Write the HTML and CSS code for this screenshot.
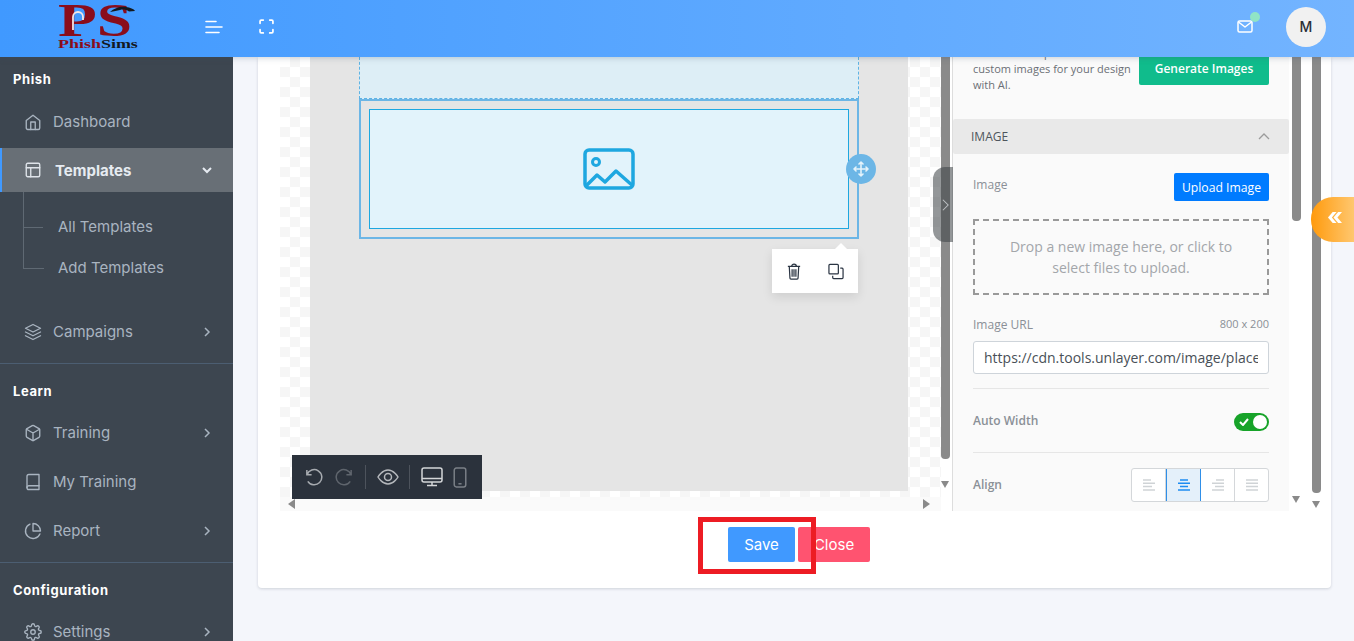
FILE: index.html
```html
<!DOCTYPE html>
<html lang="en">
<head>
  <meta charset="UTF-8">
  <title>Add Templates</title>
  <link rel="stylesheet" href="styles.css">
</head>
<body>
  <header class="topbar">
    <div class="logo">
      <div class="logo-ps">PS</div>
      <div class="logo-name"><span class="logo-red">Phish</span>Sims</div>
      <svg class="logo-art" viewBox="0 0 79 30" fill="none">
        <path d="M15 25V12a5 5 0 0 1 10 0v3" stroke="#f3e6e6" stroke-width="1.800"/>
        <path d="M52 7c4-4 11-6 16-5 4 .6 8 2 9 4l-6 .5c-3-2-6-2.500-9-1.500-3 .8-6 1.500-10 2z" fill="#14191f"/>
      </svg>
    </div>
    <svg class="top-icon menu-icon" viewBox="0 0 18 14" fill="none" stroke="#fff" stroke-width="1.600" stroke-linecap="round">
      <path d="M1 1.500h10M1 7h16M1 12.500h13"/>
    </svg>
    <svg class="top-icon full-icon" viewBox="0 0 14 14" fill="none" stroke="#fff" stroke-width="1.600" stroke-linecap="round">
      <path d="M1 4V2a1 1 0 0 1 1-1h2M10 1h2a1 1 0 0 1 1 1v2M13 10v2a1 1 0 0 1-1 1h-2M4 13H2a1 1 0 0 1-1-1v-2"/>
    </svg>
    <div class="top-right">
      <div class="mail">
        <svg viewBox="0 0 16 13" fill="none" stroke="#fff" stroke-width="1.500" stroke-linejoin="round">
          <rect x="1" y="1" width="14" height="11" rx="1.500"/>
          <path d="M1.500 2l6.500 5 6.500-5"/>
        </svg>
        <span class="mail-dot"></span>
      </div>
      <div class="avatar">M</div>
    </div>
  </header>

  <div class="layout">
    <aside class="sidebar">
      <div class="nav-label nav-label-first">Phish</div>
      <a class="nav-item">
        <svg class="nav-icon" viewBox="0 0 24 24"><path d="M3 10l9-7 9 7v10a2 2 0 0 1-2 2H5a2 2 0 0 1-2-2z"/><path d="M9 22V12h6v10"/></svg>
        <span>Dashboard</span>
      </a>
      <a class="nav-item nav-active">
        <svg class="nav-icon" viewBox="0 0 24 24"><rect x="3" y="3" width="18" height="18" rx="2"/><path d="M3 9h18M9 21V9"/></svg>
        <span>Templates</span>
        <svg class="nav-arrow nav-arrow-down" viewBox="0 0 12 12"><path d="M2 4l4 4 4-4"/></svg>
      </a>
      <div class="subnav">
        <a class="sub-item">All Templates</a>
        <a class="sub-item">Add Templates</a>
      </div>
      <a class="nav-item">
        <svg class="nav-icon" viewBox="0 0 24 24"><path d="M12 2L2 7l10 5 10-5z"/><path d="M2 17l10 5 10-5M2 12l10 5 10-5"/></svg>
        <span>Campaigns</span>
        <svg class="nav-arrow" viewBox="0 0 12 12"><path d="M4 2l4 4-4 4"/></svg>
      </a>
      <div class="nav-divider"></div>
      <div class="nav-label">Learn</div>
      <a class="nav-item">
        <svg class="nav-icon" viewBox="0 0 24 24"><path d="M21 16V8a2 2 0 0 0-1-1.730l-7-4a2 2 0 0 0-2 0l-7 4A2 2 0 0 0 3 8v8a2 2 0 0 0 1 1.730l7 4a2 2 0 0 0 2 0l7-4A2 2 0 0 0 21 16z"/><path d="M3.300 7L12 12l8.700-5M12 22V12"/></svg>
        <span>Training</span>
        <svg class="nav-arrow" viewBox="0 0 12 12"><path d="M4 2l4 4-4 4"/></svg>
      </a>
      <a class="nav-item">
        <svg class="nav-icon" viewBox="0 0 24 24"><path d="M4 19.500A2.500 2.500 0 0 1 6.500 17H20"/><path d="M6.500 2H20v20H6.500A2.500 2.500 0 0 1 4 19.500v-15A2.500 2.500 0 0 1 6.500 2z"/></svg>
        <span>My Training</span>
      </a>
      <a class="nav-item">
        <svg class="nav-icon" viewBox="0 0 24 24"><path d="M21.200 15.900A10 10 0 1 1 8 2.800"/><path d="M22 12A10 10 0 0 0 12 2v10z"/></svg>
        <span>Report</span>
        <svg class="nav-arrow" viewBox="0 0 12 12"><path d="M4 2l4 4-4 4"/></svg>
      </a>
      <div class="nav-divider"></div>
      <div class="nav-label">Configuration</div>
      <a class="nav-item">
        <svg class="nav-icon" viewBox="0 0 24 24"><circle cx="12" cy="12" r="3"/><path d="M19.400 15a1.650 1.650 0 0 0 .33 1.820l.06.06a2 2 0 0 1 0 2.830 2 2 0 0 1-2.830 0l-.06-.06a1.650 1.650 0 0 0-1.820-.33 1.650 1.650 0 0 0-1 1.510V21a2 2 0 0 1-2 2 2 2 0 0 1-2-2v-.09A1.650 1.650 0 0 0 9 19.400a1.650 1.650 0 0 0-1.820.33l-.06.06a2 2 0 0 1-2.830 0 2 2 0 0 1 0-2.830l.06-.06a1.650 1.650 0 0 0 .33-1.820 1.650 1.650 0 0 0-1.510-1H3a2 2 0 0 1-2-2 2 2 0 0 1 2-2h.09A1.650 1.650 0 0 0 4.600 9a1.650 1.650 0 0 0-.33-1.820l-.06-.06a2 2 0 0 1 0-2.830 2 2 0 0 1 2.830 0l.06.06a1.650 1.650 0 0 0 1.820.33H9a1.650 1.650 0 0 0 1-1.510V3a2 2 0 0 1 2-2 2 2 0 0 1 2 2v.09a1.650 1.650 0 0 0 1 1.510 1.650 1.650 0 0 0 1.820-.33l.06-.06a2 2 0 0 1 2.830 0 2 2 0 0 1 0 2.830l-.06.06a1.650 1.650 0 0 0-.33 1.820V9a1.650 1.650 0 0 0 1.510 1H21a2 2 0 0 1 2 2 2 2 0 0 1-2 2h-.09a1.650 1.650 0 0 0-1.510 1z"/></svg>
        <span>Settings</span>
        <svg class="nav-arrow" viewBox="0 0 12 12"><path d="M4 2l4 4-4 4"/></svg>
      </a>
    </aside>

    <main class="main">
      <section class="card">
        <div class="editor">
          <div class="canvas-wrap">
            <div class="canvas">
              <div class="email-body">
                <div class="row-dashed"></div>
                <div class="row-selected">
                  <div class="image-box">
                    <svg class="placeholder" viewBox="0 0 52 42" fill="none" stroke="#1ea7e0" stroke-width="3.500" stroke-linejoin="round">
                      <rect x="2" y="2" width="48" height="38" rx="4"/>
                      <circle cx="13" cy="14" r="3.500" stroke-width="3"/>
                      <path d="M3 38l11-11 8 7 11-11 17 15"/>
                    </svg>
                  </div>
                  <div class="move-handle">
                    <svg viewBox="0 0 16 16" fill="none" stroke="#e4f3fb" stroke-width="1.600" stroke-linecap="round" stroke-linejoin="round">
                      <path d="M8 1v14M1 8h14M6 3l2-2 2 2M6 13l2 2 2-2M3 6L1 8l2 2M13 6l2 2-2 2"/>
                    </svg>
                  </div>
                  <div class="row-actions">
                    <svg viewBox="0 0 16 18" fill="none" stroke="#2b3543" stroke-width="1.300">
                      <path d="M1.500 3.500h13M3 3.500l.7 12.500a1 1 0 0 0 1 1h6.600a1 1 0 0 0 1-1l.7-12.500M5.500 3.500c0-3 5-3 5 0M6 6.500v8M8 6.500v8M10 6.500v8"/>
                    </svg>
                    <svg viewBox="0 0 17 17" fill="none" stroke="#2b3543" stroke-width="1.300">
                      <rect x="1" y="1" width="10" height="10" rx="1"/>
                      <path d="M13 5h2a1 1 0 0 1 1 1v9a1 1 0 0 1-1 1H6a1 1 0 0 1-1-1v-2"/>
                    </svg>
                  </div>
                </div>
              </div>
              <div class="toolbar">
                <svg class="tool" viewBox="0 0 20 20" fill="none" stroke="#a7abb0" stroke-width="1.600"><path d="M3 2v5h5M3.200 7A8 8 0 1 1 4 14"/></svg>
                <svg class="tool tool-off" viewBox="0 0 20 20" fill="none" stroke="#5f656d" stroke-width="1.600"><path d="M17 2v5h-5M16.800 7A8 8 0 1 0 16 14"/></svg>
                <span class="tool-sep"></span>
                <svg class="tool tool-wide" viewBox="0 0 22 16" fill="none" stroke="#b5b8bc" stroke-width="1.500"><path d="M1 8s4-7 10-7 10 7 10 7-4 7-10 7S1 8 1 8z"/><circle cx="11" cy="8" r="3.500"/></svg>
                <span class="tool-sep"></span>
                <svg class="tool tool-wide" viewBox="0 0 22 20" fill="none" stroke="#d4d6d8" stroke-width="1.500"><rect x="1" y="1" width="20" height="14" rx="2"/><path d="M1 11.500h20M11 15v3M6 18.500h10"/></svg>
                <svg class="tool tool-phone" viewBox="0 0 13 20" fill="none" stroke="#7b8087" stroke-width="1.400"><rect x="1" y="1" width="11" height="18" rx="2"/><path d="M5 16h3"/></svg>
              </div>
              <div class="panel-toggle">
                <svg viewBox="0 0 8 14" fill="none" stroke="#bfc2c5" stroke-width="1.200"><path d="M1 1l6 6-6 6"/></svg>
              </div>
            </div>
            <div class="hscroll">
              <span class="tri tri-left"></span>
              <span class="tri tri-right"></span>
            </div>
          </div>

          <div class="scrollbar scrollbar-canvas">
            <span class="thumb"></span>
            <span class="tri tri-down"></span>
          </div>

          <div class="panel">
            <div class="ai-row">
              <p class="ai-text">Generate unique and<br>custom images for your design<br>with AI.</p>
              <button class="btn-generate">Generate Images</button>
            </div>
            <div class="section-head">
              <span>IMAGE</span>
              <svg viewBox="0 0 12 7" fill="none" stroke="#9c9c9c" stroke-width="1.300"><path d="M1 6l5-5 5 5"/></svg>
            </div>
            <div class="section-body">
              <div class="field-row field-upload">
                <label class="field-label">Image</label>
                <button class="btn-upload">Upload Image</button>
              </div>
              <div class="dropzone">Drop a new image here, or click to select files to upload.</div>
              <div class="field-row field-url">
                <label class="field-label">Image URL</label>
                <span class="field-size">800 x 200</span>
              </div>
              <input class="url-input" type="text" value="https://cdn.tools.unlayer.com/image/placeholder.png" readonly>
              <div class="field-row field-toggle">
                <label class="field-label field-bold">Auto Width</label>
                <div class="toggle">
                  <svg viewBox="0 0 10 8" fill="none" stroke="#fff" stroke-width="2"><path d="M1 4l3 3 5-6"/></svg>
                  <span class="knob"></span>
                </div>
              </div>
              <div class="field-row field-align">
                <label class="field-label field-bold">Align</label>
                <div class="align-group">
                  <span class="align-btn"><svg viewBox="0 0 14 12" stroke="#cfd3d6" stroke-width="1.500"><path d="M1 1h8M1 4.300h12M1 7.600h9M1 11h12"/></svg></span>
                  <span class="align-btn align-on"><svg viewBox="0 0 14 12" stroke="#1c8cf2" stroke-width="1.500"><path d="M3 1h8M1 4.300h12M3 7.600h8M1 11h12"/></svg></span>
                  <span class="align-btn"><svg viewBox="0 0 14 12" stroke="#cfd3d6" stroke-width="1.500"><path d="M5 1h8M1 4.300h12M4 7.600h9M1 11h12"/></svg></span>
                  <span class="align-btn"><svg viewBox="0 0 14 12" stroke="#cfd3d6" stroke-width="1.500"><path d="M1 1h12M1 4.300h12M1 7.600h12M1 11h12"/></svg></span>
                </div>
              </div>
            </div>
          </div>

          <div class="scrollbar scrollbar-panel">
            <span class="thumb"></span>
            <span class="tri tri-down"></span>
          </div>
          <div class="scrollbar scrollbar-outer">
            <span class="thumb"></span>
            <span class="tri tri-down"></span>
          </div>
        </div>

        <div class="actions">
          <button class="btn btn-save">Save</button>
          <button class="btn btn-close">Close</button>
          <div class="red-mark"></div>
        </div>
      </section>
    </main>
  </div>

  <div class="side-tab">«</div>
</body>
</html>
```

FILE: styles.css
```css
* {
  box-sizing: border-box;
}

html, body {
  height: 100%;
}

body {
  margin: 0;
  overflow: hidden;
  font-family: "Inter", "Liberation Sans", sans-serif;
  background-color: #f4f6fb;
}

button {
  border: 0;
  font-family: inherit;
  cursor: pointer;
}

/* top bar */
.topbar {
  position: relative;
  z-index: 5;
  display: flex;
  align-items: center;
  height: 57px;
  padding-bottom: 4px;
  background: linear-gradient(to right, #4099ff, #73b4ff);
  box-shadow: 0 1px 6px rgba(60, 80, 100, 0.25);
}

.logo {
  position: relative;
  width: 79px;
  height: 47px;
  margin-left: 58px;
  font-family: "Liberation Serif", serif;
  font-weight: bold;
  color: #8a0d1b;
}

.logo-ps {
  height: 35px;
  font-size: 46px;
  line-height: 35px;
  transform: scaleX(1.38);
  transform-origin: left center;
}

.logo-name {
  width: 62px;
  font-size: 13.500px;
  line-height: 12px;
  color: #14191f;
  transform: scaleX(1.33);
  transform-origin: left center;
}

.logo-red {
  color: #8a0d1b;
}

.logo-art {
  position: absolute;
  top: 2px;
  left: 0;
  width: 79px;
  height: 30px;
}

.top-icon {
  flex: none;
}

.menu-icon {
  width: 18px;
  height: 14px;
  margin-left: 68px;
}

.full-icon {
  width: 15px;
  height: 15px;
  margin-left: 36px;
}

.top-right {
  display: flex;
  align-items: center;
  margin-left: auto;
  margin-right: 28px;
}

.mail {
  position: relative;
  width: 16px;
  height: 13px;
  margin-right: 33px;
}

.mail svg {
  display: block;
  width: 16px;
  height: 13px;
}

.mail-dot {
  position: absolute;
  top: -8px;
  right: -7px;
  width: 10px;
  height: 10px;
  border-radius: 50%;
  background-color: #90e4c6;
}

.avatar {
  width: 40px;
  height: 40px;
  border-radius: 50%;
  background-color: #f1f1f1;
  color: #2b2f36;
  font-size: 14px;
  font-weight: 500;
  line-height: 40px;
  text-align: center;
}

/* page layout */
.layout {
  display: flex;
  height: calc(100vh - 57px);
}

.sidebar {
  flex: none;
  width: 233px;
  overflow: hidden;
  background-color: #3d4650;
  color: #a9b4c0;
}

.nav-label {
  height: 44px;
  padding: 9px 0 0 13px;
  color: #fff;
  font-size: 13px;
  font-weight: 700;
  letter-spacing: 0.6px;
  line-height: 37px;
}

.nav-label-first {
  height: 40px;
  padding-top: 4px;
}

.nav-item {
  display: flex;
  align-items: center;
  height: 49px;
  padding-left: 24px;
  font-size: 15px;
}

.nav-icon {
  flex: none;
  width: 18px;
  height: 18px;
  margin-right: 11px;
  fill: none;
  stroke: #a9b4c0;
  stroke-width: 1.800;
  stroke-linecap: round;
  stroke-linejoin: round;
}

.nav-arrow {
  width: 12px;
  height: 12px;
  margin-left: auto;
  margin-right: 20px;
  fill: none;
  stroke: #a9b4c0;
  stroke-width: 1.500;
}

.nav-active {
  height: 44px;
  margin-top: 2px;
  padding-left: 22px;
  border-left: 2px solid #4099ff;
  background-color: #686f76;
  color: #e6ebf1;
  font-weight: 700;
}

.nav-active .nav-icon {
  margin-right: 13px;
  stroke: #dfe4ea;
}

.nav-arrow-down {
  stroke: #e6ebf1;
  stroke-width: 2;
}

.subnav {
  position: relative;
  padding: 14px 0 19px 58px;
}

.subnav::before {
  content: "";
  position: absolute;
  top: 0;
  left: 23px;
  width: 20px;
  height: 76px;
  border-left: 1px solid #5f6973;
  border-bottom: 1px solid #5f6973;
}

.sub-item {
  position: relative;
  display: block;
  height: 41px;
  font-size: 15px;
  line-height: 41px;
}

.sub-item:first-child::before {
  content: "";
  position: absolute;
  top: 21px;
  left: -35px;
  width: 20px;
  border-top: 1px solid #5f6973;
}

.nav-divider {
  height: 1px;
  margin-top: 7px;
  background-color: #4c5e72;
}

/* main card */
.main {
  flex: 1;
  min-width: 0;
  padding: 0 23px 0 25px;
}

.card {
  height: 531px;
  border-radius: 0 0 4px 4px;
  background-color: #fff;
  box-shadow: 0 1px 3px rgba(60, 70, 90, 0.2);
}

.editor {
  display: flex;
  height: 454px;
  margin-left: 22px;
  background-color: #fff;
}

/* email canvas */
.canvas-wrap {
  flex: none;
  width: 661px;
}

.canvas {
  position: relative;
  height: 440px;
  padding: 0 33px 6px 30px;
  background: repeating-conic-gradient(#f6f6f6 0 25%, #fff 0 50%) 0 0 / 20px 20px;
}

.email-body {
  height: 434px;
  padding: 0 49px;
  background-color: #e5e5e5;
}

.row-dashed {
  height: 42px;
  border: 1px dashed #5eb3e4;
  border-top: 0;
  background-color: #ddeef6;
}

.row-selected {
  position: relative;
  height: 140px;
  padding: 8px;
  border: 2px solid #6cb6e6;
}

.image-box {
  display: flex;
  align-items: center;
  justify-content: center;
  height: 120px;
  border: 1px solid #1ea7e0;
  background-color: #e2f3fb;
}

.placeholder {
  width: 52px;
  height: 42px;
}

.move-handle {
  position: absolute;
  top: 53px;
  right: -19px;
  display: flex;
  align-items: center;
  justify-content: center;
  width: 30px;
  height: 30px;
  border-radius: 50%;
  background-color: #6cb6e6;
}

.move-handle svg {
  width: 16px;
  height: 16px;
}

.row-actions {
  position: absolute;
  top: 148px;
  right: -1px;
  display: flex;
  align-items: center;
  justify-content: space-between;
  width: 86px;
  height: 44px;
  padding: 0 14px;
  background-color: #fff;
  box-shadow: 0 4px 10px rgba(0, 0, 0, 0.1);
}

.row-actions::before {
  content: "";
  position: absolute;
  top: -6px;
  right: 11px;
  border: 6px solid transparent;
  border-top: 0;
  border-bottom-color: #fff;
}

.row-actions svg {
  width: 16px;
  height: 17px;
}

.toolbar {
  position: absolute;
  top: 398px;
  left: 12px;
  display: flex;
  align-items: center;
  width: 190px;
  height: 44px;
  padding-left: 12px;
  background-color: #2b323c;
}

.tool {
  flex: none;
  width: 19px;
  height: 19px;
  margin-right: 12px;
}

.tool-off {
  margin-right: 11px;
}

.tool-wide {
  width: 22px;
  height: 20px;
  margin-right: 10px;
}

.tool-phone {
  width: 14px;
  height: 21px;
  margin: 0;
}

.tool-sep {
  flex: none;
  width: 1px;
  height: 24px;
  margin-right: 11px;
  background-color: #4d535c;
}

.panel-toggle {
  position: absolute;
  top: 110px;
  right: -12px;
  z-index: 2;
  display: flex;
  align-items: center;
  justify-content: flex-end;
  width: 20px;
  height: 75px;
  padding-right: 4px;
  border-radius: 12px 0 0 12px;
  background-color: rgba(60, 65, 70, 0.55);
}

.panel-toggle svg {
  width: 7px;
  height: 14px;
}

.hscroll {
  display: flex;
  align-items: center;
  justify-content: space-between;
  height: 14px;
  padding: 0 11px 0 8px;
  background-color: #fafafa;
}

.tri {
  display: block;
  width: 0;
  height: 0;
  border: 5px solid transparent;
}

.tri-left {
  border-left: 0;
  border-right: 7px solid #8a8a8a;
}

.tri-right {
  border-right: 0;
  border-left: 7px solid #8a8a8a;
}

.tri-down {
  position: absolute;
  left: 0;
  border-width: 7px 4.500px 0;
  border-top-color: #8a8a8a;
}

/* scrollbars */
.scrollbar {
  position: relative;
  flex: none;
  width: 9px;
}

.thumb {
  display: block;
  width: 9px;
  border-radius: 0 0 4px 4px;
  background-color: #8a8a8a;
}

.scrollbar-canvas {
  margin-right: 2px;
}

.scrollbar-canvas .thumb {
  height: 402px;
}

.scrollbar-canvas .tri-down {
  top: 424px;
}

.scrollbar-panel {
  margin-left: 3px;
  margin-right: 11px;
}

.scrollbar-panel .thumb {
  height: 164px;
}

.scrollbar-panel .tri-down {
  top: 439px;
}

.scrollbar-outer .thumb {
  height: 436px;
}

.scrollbar-outer .tri-down {
  top: 444px;
}

/* properties panel */
.panel {
  flex: none;
  width: 337px;
  height: 454px;
  overflow: hidden;
  border-left: 1px solid #ddd;
  background-color: #fafafa;
  font-family: "Open Sans", "Liberation Sans", sans-serif;
}

.ai-row {
  display: flex;
  align-items: flex-end;
  justify-content: space-between;
  height: 62px;
  padding: 0 20px;
}

.ai-text {
  flex: none;
  margin: 0 0 26px;
  color: #6a6f75;
  font-size: 11px;
  line-height: 16px;
  white-space: nowrap;
}

.btn-generate {
  flex: none;
  width: 130px;
  height: 34px;
  margin-bottom: 34px;
  border-radius: 2px;
  background-color: #10bc8c;
  color: #fff;
  font-size: 12px;
  font-weight: 600;
}

.section-head {
  display: flex;
  align-items: center;
  justify-content: space-between;
  height: 35px;
  padding: 0 19px 0 18px;
  border-radius: 2px;
  background-color: #e9e9e9;
  color: #4e555c;
  font-size: 12px;
  font-weight: 500;
}

.section-head svg {
  width: 12px;
  height: 7px;
}

.section-body {
  padding: 0 20px;
}

.field-row {
  display: flex;
  align-items: center;
  justify-content: space-between;
}

.field-label {
  color: #8a9097;
  font-size: 12px;
}

.field-bold {
  font-weight: 600;
}

.field-upload {
  height: 28px;
  margin-top: 19px;
}

.field-upload .field-label {
  margin-top: -6px;
}

.btn-upload {
  width: 95px;
  height: 28px;
  border-radius: 2px;
  background-color: #007bff;
  color: #fff;
  font-size: 12.200px;
}

.dropzone {
  display: flex;
  align-items: center;
  justify-content: center;
  height: 76px;
  margin-top: 18px;
  padding: 0 30px;
  border: 2px dashed #999;
  color: #a3a6aa;
  font-size: 14px;
  line-height: 21px;
  text-align: center;
}

.field-url {
  height: 16px;
  margin-top: 22px;
}

.field-url .field-label {
  margin-top: -2px;
}

.field-size {
  margin-top: -3px;
  color: #8a9097;
  font-size: 11px;
}

.url-input {
  display: block;
  width: 100%;
  height: 33px;
  margin-top: 8px;
  padding: 0 10px;
  border: 1px solid #ced4da;
  border-radius: 3px;
  outline: 0;
  background-color: #fff;
  color: #495057;
  font-family: inherit;
  font-size: 14px;
}

.field-toggle {
  height: 65px;
  margin-top: 14px;
  border-top: 1px solid #e6e6e6;
  border-bottom: 1px solid #e6e6e6;
}

.toggle {
  position: relative;
  display: flex;
  align-items: center;
  width: 35px;
  height: 18px;
  margin-top: 3px;
  padding-left: 5px;
  border-radius: 9px;
  background-color: #17a329;
}

.toggle svg {
  width: 10px;
  height: 8px;
}

.knob {
  position: absolute;
  top: 2px;
  right: 2px;
  width: 14px;
  height: 14px;
  border-radius: 50%;
  background-color: #fff;
}

.field-align {
  height: 34px;
  margin-top: 15px;
}

.field-align .field-label {
  margin-top: -1px;
}

.align-group {
  display: flex;
  width: 138px;
  height: 34px;
  overflow: hidden;
  border: 1px solid #d4d7da;
  border-radius: 3px;
  background-color: #fff;
}

.align-btn {
  display: flex;
  flex: 1;
  align-items: center;
  justify-content: center;
  border-right: 1px solid #d4d7da;
}

.align-btn:last-child {
  border-right: 0;
}

.align-btn svg {
  width: 14px;
  height: 12px;
}

.align-on {
  margin: -1px 0;
  border: 1px solid #2f8fe8;
  background-color: #e4f0fa;
}

/* save and close */
.actions {
  position: relative;
  display: flex;
  justify-content: center;
  gap: 3px;
  padding: 16px 0 0 10px;
  margin-left: -1px;
}

.btn {
  height: 35px;
  border-radius: 2px;
  color: #fff;
  font-size: 15px;
}

.btn-save {
  width: 67px;
  background-color: #4099ff;
}

.btn-close {
  width: 72px;
  background-color: #ff5370;
}

.red-mark {
  position: absolute;
  top: 6px;
  left: 441px;
  width: 118px;
  height: 57px;
  border: 5px solid #ed1c24;
}

.side-tab {
  position: fixed;
  top: 197px;
  right: 0;
  z-index: 6;
  width: 43px;
  height: 45px;
  padding-left: 16px;
  border-radius: 22px 0 0 22px;
  background: linear-gradient(to right, #ff9a0c, #ffc76f);
  color: #fff;
  font-size: 24px;
  font-weight: 700;
  line-height: 40px;
}
```
